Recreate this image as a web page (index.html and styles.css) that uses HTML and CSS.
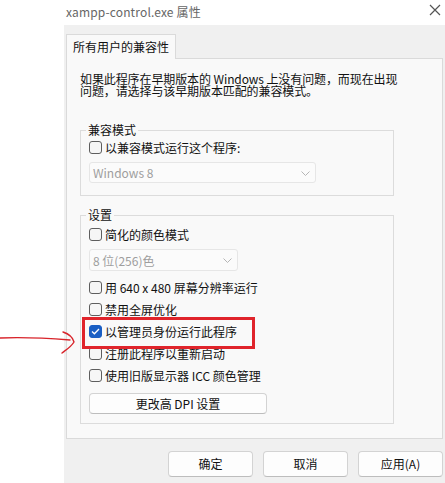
FILE: index.html
```html
<!DOCTYPE html>
<html lang="zh-CN">
<head>
<meta charset="utf-8">
<title>xampp-control.exe 属性</title>
<link rel="stylesheet" href="styles.css">
</head>
<body>
<svg class="arrow" width="80" height="36" viewBox="0 0 80 36" aria-hidden="true">
  <path d="M0 13 C20 12 45 13 70 15" fill="none" stroke="#d8232a" stroke-width="1.4" stroke-linecap="round"/>
  <path d="M63 7 C69 9 73 13 74 17 C71 22 66 25 62 28" fill="none" stroke="#d8232a" stroke-width="1.4" stroke-linecap="round"/>
</svg>
<div class="window">
  <div class="titlebar">
    <span class="title">xampp-control.exe 属性</span>
    <span class="caption-btns">
      <svg class="winx" width="12" height="12" viewBox="0 0 12 12" aria-hidden="true"><path d="M1 1 L11 11 M11 1 L1 11" fill="none" stroke="#555555" stroke-width="1.2"/></svg>
    </span>
  </div>
  <div class="dialog">
    <div class="tabs">
      <div class="tab">所有用户的兼容性</div>
    </div>
    <div class="panel">
      <p class="desc">如果此程序在早期版本的 Windows 上没有问题，而现在出现<br>问题，请选择与该早期版本匹配的兼容模式。</p>

      <fieldset class="group group-compat">
        <legend>兼容模式</legend>
        <label class="row row-short"><span class="box"></span>以兼容模式运行这个程序:</label>
        <div class="combo combo-wide"><span>Windows 8</span><svg class="chev" width="9" height="5" viewBox="0 0 9 5"><path d="M0.5 0.5 L4.5 4.5 L8.5 0.5" fill="none" stroke="#b5b5b5" stroke-width="1"/></svg></div>
      </fieldset>

      <fieldset class="group group-settings">
        <legend>设置</legend>
        <label class="row"><span class="box"></span>简化的颜色模式</label>
        <div class="combo combo-narrow"><span>8 位(256)色</span><svg class="chev" width="9" height="5" viewBox="0 0 9 5"><path d="M0.5 0.5 L4.5 4.5 L8.5 0.5" fill="none" stroke="#b5b5b5" stroke-width="1"/></svg></div>
        <label class="row row-after-combo"><span class="box"></span>用 640 x 480 屏幕分辨率运行</label>
        <label class="row"><span class="box"></span>禁用全屏优化</label>
        <label class="row row-marked"><span class="box checked"><svg width="9" height="7" viewBox="0 0 9 7"><path d="M1 3.6 L3.4 5.8 L8 1" fill="none" stroke="#ffffff" stroke-width="1.3"/></svg></span>以管理员身份运行此程序</label>
        <label class="row"><span class="box"></span>注册此程序以重新启动</label>
        <label class="row"><span class="box"></span>使用旧版显示器 ICC 颜色管理</label>
        <button class="btn btn-dpi" type="button">更改高 DPI 设置</button>
      </fieldset>
    </div>
    <div class="actions">
      <button class="btn btn-action" type="button">确定</button>
      <button class="btn btn-action" type="button">取消</button>
      <button class="btn btn-action" type="button">应用(A)</button>
    </div>
  </div>
</div>
</body>
</html>
```
FILE: styles.css
```css
* { box-sizing: border-box; }

html, body {
  margin: 0;
  background: #ffffff;
}

body {
  width: 445px;
  font-family: "Noto Sans CJK SC", "Noto Sans", sans-serif;
  font-size: 12px;
  color: #111111;
}

.arrow {
  position: absolute;
  left: 0;
  top: 325px;
}

.window {
  margin-left: 64px;
  width: 381px;
}

.titlebar {
  height: 25px;
  display: flex;
  align-items: center;
  padding: 0 0 2px 2px;
}

.title {
  flex: 1;
  font-size: 12px;
  line-height: 14px;
  color: #666666;
  letter-spacing: 0.15px;
}

.caption-btns {
  flex: none;
  width: 20px;
  height: 20px;
  margin-top: -4px;
  display: flex;
  align-items: center;
  justify-content: center;
  position: relative;
  z-index: 5;
}

.winx {
  display: block;
}

.dialog {
  background: #f0f0f0;
  height: 458px;
  padding: 9px 2px 0 2px;
}

.tabs {
  display: flex;
  height: 24px;
}

.tab {
  width: 110px;
  height: 25px;
  padding-left: 6px;
  line-height: 24px;
  background: #f9f9f9;
  border: 1px solid #dadada;
  border-bottom: none;
  position: relative;
  z-index: 1;
}

.panel {
  height: 381px;
  background: #f9f9f9;
  border: 1px solid #dadada;
  padding: 14px 13px 0 13px;
}

.desc {
  margin: 0;
  line-height: 12px;
  letter-spacing: -0.1px;
}

.group {
  margin: 0;
  width: 314px;
  border: 1px solid #dcdcdc;
  padding: 0 8px;
  min-width: 0;
}

.group legend {
  padding: 0 2px;
  margin-left: -3px;
  line-height: 16px;
  height: 16px;
}

.group-compat {
  margin-top: 25px;
  padding-bottom: 12px;
}

.group-settings {
  margin-top: 11px;
  padding-bottom: 9px;
}

.row {
  display: flex;
  align-items: center;
  height: 22px;
  gap: 3px;
  white-space: nowrap;
}

.row-short {
  height: 18px;
}

.row-after-combo {
  margin-top: 5px;
}

.row-marked {
  position: relative;
}

.row-marked::after {
  content: "";
  position: absolute;
  left: -7px;
  top: -3px;
  width: 167px;
  height: 26px;
  border: 3px solid #e0242b;
}

.box {
  width: 13px;
  height: 13px;
  flex: none;
  border: 1px solid #5e5e5e;
  border-radius: 3px;
  background: #f6f6f6;
  display: flex;
  align-items: center;
  justify-content: center;
}

.box.checked {
  background: #1a5fc4;
  border-color: #1a5fc4;
}

.combo {
  display: flex;
  align-items: center;
  justify-content: space-between;
  border: 1px solid #e6e6e6;
  border-radius: 3px;
  background: #fbfbfb;
  color: #9e9e9e;
  padding: 0 5px 0 3px;
}

.combo-wide {
  width: 227px;
  height: 21px;
  margin-top: 6px;
}

.combo-narrow {
  width: 149px;
  height: 22px;
  margin-top: 4px;
}

.chev {
  margin-top: 1px;
}

.btn {
  font-family: inherit;
  font-size: 12px;
  color: #111111;
  background: #fdfdfd;
  border: 1px solid #d3d3d3;
  border-bottom-color: #bdbdbd;
  border-radius: 4px;
  padding: 0;
  line-height: 1;
}

.btn-dpi {
  display: block;
  width: 178px;
  height: 21px;
  margin-top: 7px;
}

.actions {
  display: flex;
  justify-content: flex-end;
  gap: 10px;
  margin-top: 12px;
}

.btn-action {
  width: 85px;
  height: 26px;
}
```
